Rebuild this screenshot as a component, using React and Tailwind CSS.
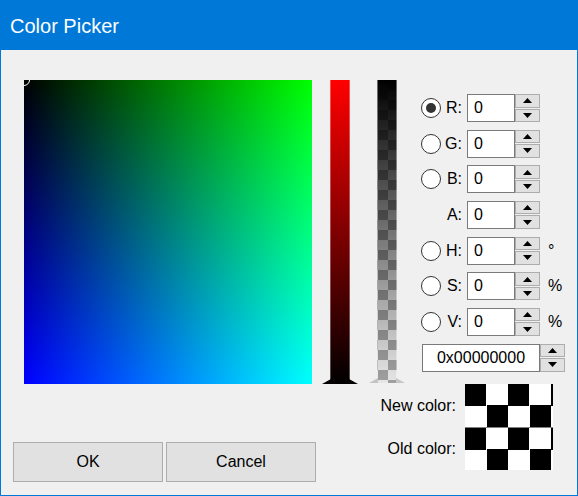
import React from 'react'

const font = "font-['Liberation_Sans',Arial,sans-serif]"

function Arrow({ down }) {
  return (
    <svg width="9" height="5" viewBox="0 0 9 5">
      <path d={down ? 'M0 0H9L4.5 5z' : 'M4.5 0L9 5H0z'} fill="#000" />
    </svg>
  )
}

function Spinner() {
  return (
    <div className="flex flex-col gap-px w-[25px] h-full">
      <div className="flex-1 border border-[#adadad] bg-[#e1e1e1] flex items-center justify-center">
        <Arrow />
      </div>
      <div className="flex-1 border border-[#adadad] bg-[#e1e1e1] flex items-center justify-center">
        <Arrow down />
      </div>
    </div>
  )
}

function Radio({ checked }) {
  return (
    <div className="w-[20px] h-[20px] rounded-full border border-[#333] bg-white flex items-center justify-center">
      {checked && <div className="w-[10px] h-[10px] rounded-full bg-[#333]" />}
    </div>
  )
}

function Row({ radio, checked, label, unit }) {
  return (
    <div className="flex items-center h-[28px]">
      <div className="w-[20px] h-[20px]">{radio && <Radio checked={checked} />}</div>
      <div className="w-[26px] text-right pr-[5px]">{label}</div>
      <div className="w-[48px] h-full border border-[#7a7a7a] bg-white pl-[6px] flex items-center">0</div>
      <Spinner />
      {unit && <span className="ml-[8px]">{unit}</span>}
    </div>
  )
}

function Marker({ side, color }) {
  const pts = side === 'left' ? '0,5 9,0 9,5' : '0,0 9,5 0,5'
  return (
    <svg width="9" height="5" viewBox="0 0 9 5" className={`absolute bottom-0 ${side === 'left' ? 'left-[-9px]' : 'right-[-9px]'}`}>
      <polygon points={pts} fill={color} />
    </svg>
  )
}

export default function App() {
  const rows = [
    { radio: true, checked: true, label: 'R:' },
    { radio: true, label: 'G:' },
    { radio: true, label: 'B:' },
    { radio: false, label: 'A:' },
    { radio: true, label: 'H:', unit: '°' },
    { radio: true, label: 'S:', unit: '%' },
    { radio: true, label: 'V:', unit: '%' },
  ]

  return (
    <div className={`w-[578px] h-[496px] border border-[#0078d7] bg-[#f0f0f0] text-black text-[16px] leading-[20px] ${font}`}>
      <div className="h-[49px] bg-[#0078d7] text-white text-[20px] leading-[20px] pt-[15px] pl-[9px]">Color Picker</div>

      <div className="flex mt-[30px] ml-[23px] h-[304px]">
        <div className="relative w-[288px] h-[304px] overflow-hidden bg-[linear-gradient(to_bottom,#000,#00f),linear-gradient(to_right,#000,#0f0)] bg-blend-screen">
          <div className="absolute left-[-6px] top-[-6px] w-[12px] h-[12px] rounded-full border border-white" />
        </div>

        <div className="relative ml-[18px] w-[20px] h-[304px] border-x border-white/30 bg-[linear-gradient(to_bottom,#f00,#000)]">
          <Marker side="left" color="#000" />
          <Marker side="right" color="#000" />
        </div>

        <div className="relative ml-[27px] w-[20px] h-[303px] border-x border-white/40 bg-[linear-gradient(to_bottom,#000,transparent),conic-gradient(#a0a0a0_25%,#e6e6e6_0_50%,#a0a0a0_0_75%,#e6e6e6_0)] bg-[length:100%_100%,20px_20px]">
          <Marker side="left" color="#c4c4c4" />
          <Marker side="right" color="#c4c4c4" />
        </div>

        <div className="ml-[24px] pt-[14px] flex flex-col gap-[7.67px]">
          {rows.map((r) => (
            <Row key={r.label} {...r} />
          ))}
          <div className="flex items-center h-[28px] ml-px">
            <div className="w-[118px] h-full border border-[#7a7a7a] bg-white flex items-center justify-center">0x00000000</div>
            <Spinner />
          </div>
        </div>
      </div>

      <div className="flex justify-between h-[111px]">
        <div className="self-end mb-[13px] ml-[12px] flex gap-[3px]">
          <button className="w-[150px] h-[40px] border border-[#adadad] bg-[#e1e1e1]">OK</button>
          <button className="w-[150px] h-[40px] border border-[#adadad] bg-[#e1e1e1]">Cancel</button>
        </div>
        <div className="flex gap-[9px] mr-[24px]">
          <div className="flex flex-col">
            <div className="h-[43px] flex items-center justify-end">New color:</div>
            <div className="h-[43px] flex items-center justify-end">Old color:</div>
          </div>
          <div className="flex flex-col w-[88px]">
            <div className="h-[43px] bg-[conic-gradient(#fff_25%,#000_0_50%,#fff_0_75%,#000_0)] bg-[length:43px_43px]" />
            <div className="h-[43px] border-t border-[#808080] bg-[conic-gradient(#fff_25%,#000_0_50%,#fff_0_75%,#000_0)] bg-[length:43px_43px]" />
          </div>
        </div>
      </div>
    </div>
  )
}
